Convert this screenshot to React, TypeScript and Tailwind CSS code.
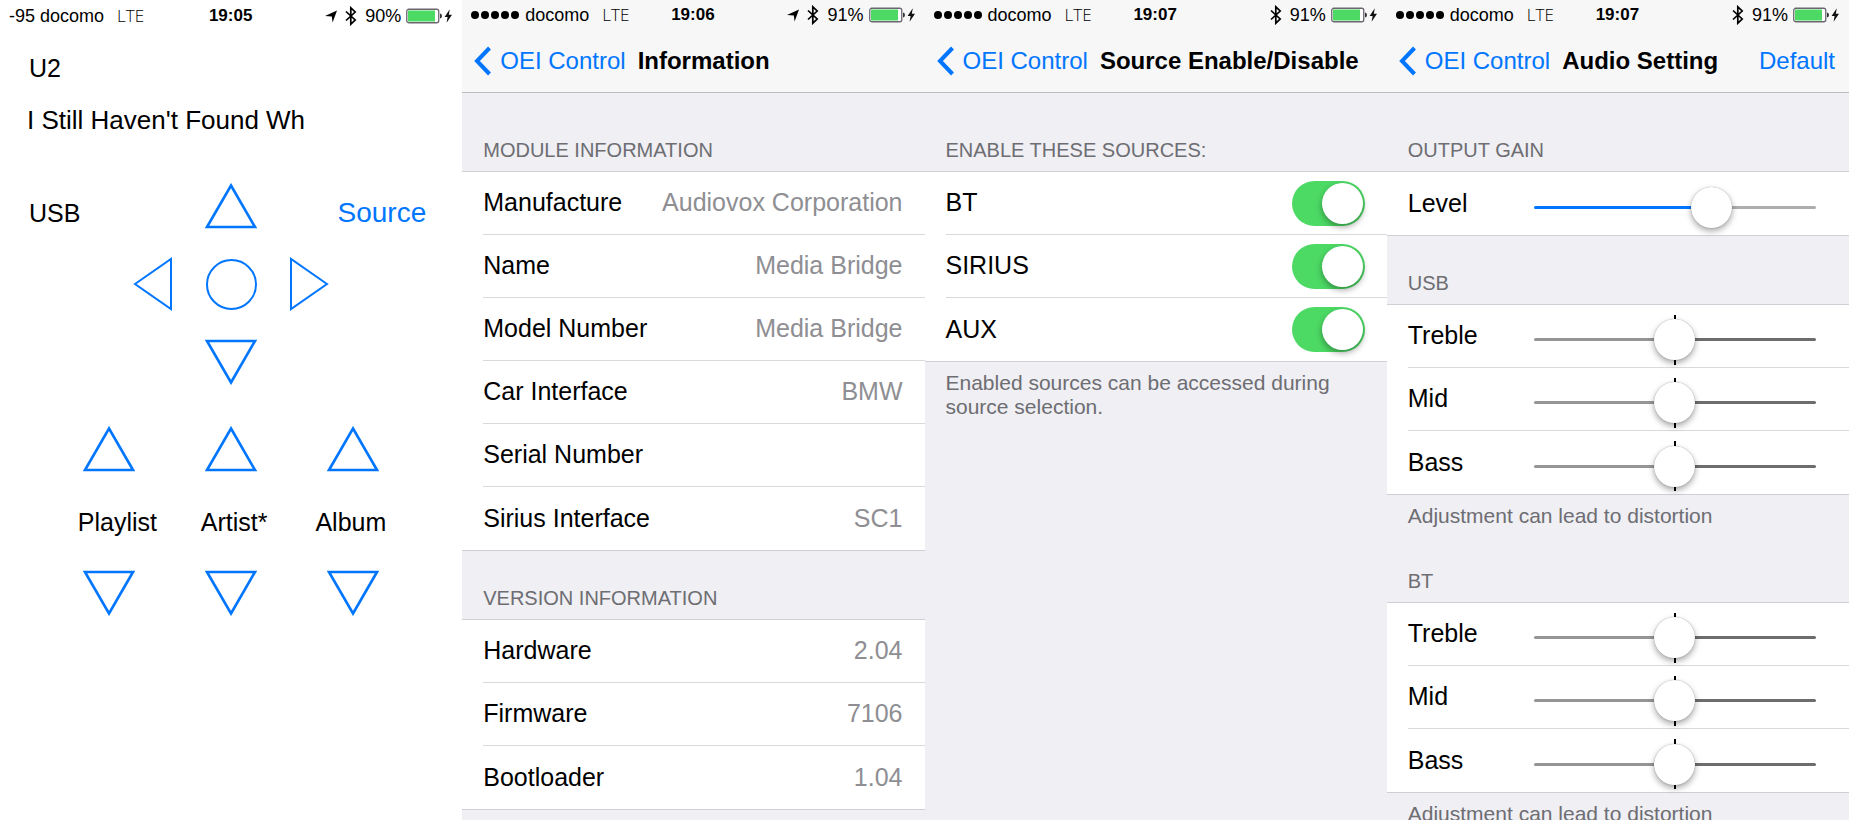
import { useState, type ReactNode } from 'react'

type Direction = 'up' | 'down' | 'left' | 'right'

const triangles: Record<Direction, { w: number, h: number, points: string }> = {
    up: { w: 52, h: 46, points: '26,2.5 50,44 2,44' },
    down: { w: 52, h: 46, points: '26,43.5 50,2 2,2' },
    left: { w: 40, h: 54, points: '2,27 38,2 38,52' },
    right: { w: 40, h: 54, points: '38,27 2,2 2,52' },
}

function TriangleButton({ direction, label }: { direction: Direction, label: string }) {
    const { w, h, points } = triangles[direction]
    const strokeWidth = h > w ? 2 : 2.6
    return (
        <button type="button" aria-label={label} className="text-[#0076ff]">
            <svg width={w} height={h} viewBox={`0 0 ${w} ${h}`} fill="none" stroke="currentColor" strokeWidth={strokeWidth}>
                <polygon points={points} />
            </svg>
        </button>
    )
}

function LocationIcon() {
    return (
        <svg width="12" height="13" viewBox="0 0 12 13" fill="currentColor" aria-hidden="true">
            <path d="M12 0.5 L7.6 12.5 L6.8 6.4 L0 6 Z" />
        </svg>
    )
}

function BluetoothIcon() {
    return (
        <svg width="12" height="20" viewBox="0 0 12 20" fill="none" stroke="currentColor" strokeWidth="1.7" aria-hidden="true">
            <path d="M1 5.5 L10.2 14 L5.8 18.2 V1.8 L10.2 6 L1 14.5" />
        </svg>
    )
}

function BatteryIcon() {
    return (
        <svg width="46" height="16" viewBox="0 0 46 16" aria-hidden="true">
            <rect x="0.75" y="1.25" width="32" height="13.5" rx="2" fill="#fff" stroke="#6b6570" strokeWidth="1.3" />
            <rect x="2" y="2.5" width="27" height="11" fill="#4cd964" />
            <path d="M34 5.5 Q36 5.8 36 8 Q36 10.2 34 10.5 Z" fill="#333" />
            <path d="M43.8 1.2 L38.6 9 H41.6 L40.6 14.8 L46 6.8 H42.8 Z" fill="#111" />
        </svg>
    )
}

function StatusBar({ carrier, dots, time, battery, location }: { carrier: string, dots?: boolean, time: string, battery: string, location?: boolean }) {
    return (
        <div className="grid h-[30px] grid-cols-[1fr_auto_1fr] items-center pl-[9px] pr-[10px] text-[18px]">
            <div className="flex items-center">
                {dots && (
                    <span className="mr-[6px] flex gap-[2px]">
                        {[0, 1, 2, 3, 4].map((dot) => <span key={dot} className="size-2 rounded-full bg-black" />)}
                    </span>
                )}
                <span>{carrier}</span>
                <span className="ml-[13px] font-['Open_Sans',sans-serif] text-[17px] font-light">LTE</span>
            </div>
            <span className="text-[17px] font-bold">{time}</span>
            <div className="flex items-center justify-end">
                {location && <span className="mr-[8px]"><LocationIcon /></span>}
                <BluetoothIcon />
                <span className="ml-[8px] mr-[5px]">{battery}</span>
                <BatteryIcon />
            </div>
        </div>
    )
}

function NavBar({ title, action }: { title: string, action?: string }) {
    return (
        <nav className="flex h-[62px] items-center pl-[12px] pr-[14px] text-2xl whitespace-nowrap">
            <a href="#oei-control" className="flex items-center gap-[9px] text-[#0076ff]">
                <svg width="17" height="30" viewBox="0 0 17 30" fill="none" stroke="currentColor" strokeWidth="4" aria-hidden="true">
                    <path d="M15.5 2 L3 15 L15.5 28" />
                </svg>
                OEI Control
            </a>
            <h1 className="ml-[12px] font-bold">{title}</h1>
            {action && <button type="button" className="ml-auto text-[#0076ff]">{action}</button>}
        </nav>
    )
}

function Screen({ header, children }: { header: ReactNode, children: ReactNode }) {
    return (
        <section className="min-w-0 bg-[#efeff4]">
            <header className="border-b border-[#bcbbc1] bg-[#f7f7f8]">{header}</header>
            <div className="pt-[10px]">{children}</div>
        </section>
    )
}

function SectionTitle({ children }: { children: ReactNode }) {
    return <h2 className="flex h-[68px] items-end pb-[7px] pl-[21px] text-xl text-[#6d6d72]">{children}</h2>
}

const listClass = 'border-y border-[#d0cfd5] bg-white pl-[21px] text-[25px]'
const rowClass = 'flex h-[63px] items-center border-b border-[#d9d8dc] last:border-b-0'

function InfoList({ items }: { items: [string, string][] }) {
    return (
        <dl className={listClass}>
            {items.map(([name, value]) => (
                <div key={name} className={`${rowClass} justify-between pr-[22px]`}>
                    <dt>{name}</dt>
                    <dd className="text-[#8e8e93]">{value}</dd>
                </div>
            ))}
        </dl>
    )
}

function SwitchRow({ name }: { name: string }) {
    const [on, setOn] = useState(true)
    return (
        <label className={`${rowClass} justify-between pr-[22px]`}>
            {name}
            <input
                type="checkbox"
                role="switch"
                checked={on}
                onChange={(e) => setOn(e.target.checked)}
                className="flex h-[45px] w-[73px] appearance-none items-center rounded-full bg-[#d9d9de] px-[2px] before:size-[41px] before:rounded-full before:bg-white before:shadow-[0_3px_6px_rgba(0,0,0,0.35)] checked:justify-end checked:bg-[#4cd964]"
            />
        </label>
    )
}

function SliderRow({ name, group, start, centered }: { name: string, group: string, start: number, centered?: boolean }) {
    const [value, setValue] = useState(start)
    const id = `${group}-${name}`
    const left = centered ? '#959595' : '#0076ff'
    const right = centered ? '#6d6d6d' : '#adadad'
    return (
        <div className={`${rowClass} pr-[33px]`}>
            <label htmlFor={id} className="w-[126px] shrink-0">{name}</label>
            <div className="relative mt-[7px] flex h-[50px] flex-1 items-center">
                <span
                    className="absolute inset-x-0 h-[3px] rounded-full"
                    style={{ background: `linear-gradient(to right, ${left} ${value}%, ${right} ${value}%)` }}
                />
                {centered && <span className="absolute inset-y-0 left-1/2 w-[2px] -translate-x-1/2 bg-black" />}
                <input
                    id={id}
                    type="range"
                    value={value}
                    onChange={(e) => setValue(Number(e.target.value))}
                    className="relative h-[41px] w-full appearance-none bg-transparent [&::-webkit-slider-thumb]:size-[41px] [&::-webkit-slider-thumb]:appearance-none [&::-webkit-slider-thumb]:rounded-full [&::-webkit-slider-thumb]:bg-white [&::-webkit-slider-thumb]:shadow-[0_0_1px_rgba(0,0,0,0.4),0_3px_6px_rgba(0,0,0,0.35)]"
                />
            </div>
        </div>
    )
}

function ToneControls({ source }: { source: string }) {
    return (
        <>
            <SectionTitle>{source}</SectionTitle>
            <div className={listClass}>
                <SliderRow name="Treble" group={source} start={50} centered />
                <SliderRow name="Mid" group={source} start={50} centered />
                <SliderRow name="Bass" group={source} start={50} centered />
            </div>
            <p className="h-[39px] pl-[21px] pt-[9px] text-[21px] leading-6 text-[#6d6d72]">Adjustment can lead to distortion</p>
        </>
    )
}

function PlayerScreen() {
    const lists = ['Playlist', 'Artist*', 'Album']
    return (
        <section className="min-w-0 bg-white text-[25px] leading-8">
            <StatusBar carrier="-95 docomo" time="19:05" battery="90%" location />
            <p className="mt-[22px] pl-[29px]">U2</p>
            <p className="mt-[20px] pl-[27px] text-[26px] leading-8">I Still Haven't Found Wh</p>

            <div className="mt-[31px] grid auto-rows-[78px] grid-cols-[1fr_78px_78px_78px_1fr] place-items-center">
                <span className="col-span-2 justify-self-start pl-[29px] pt-[14px]">USB</span>
                <TriangleButton direction="up" label="Up" />
                <button type="button" className="col-span-2 justify-self-end pr-[36px] pt-[14px] text-[28px] text-[#0076ff]">Source</button>
                <div className="col-start-2 flex"><TriangleButton direction="left" label="Left" /></div>
                <button type="button" aria-label="Select" className="size-[51px] rounded-full border-2 border-[#0076ff]" />
                <TriangleButton direction="right" label="Right" />
                <div className="col-start-3 flex"><TriangleButton direction="down" label="Down" /></div>
            </div>

            <div className="mt-[25px] grid grid-cols-3 justify-items-center px-12">
                {lists.map((name) => <TriangleButton key={name} direction="up" label={`Previous ${name}`} />)}
            </div>
            <div className="mt-[34px] grid grid-cols-3 justify-items-center pl-[59px] pr-[53px]">
                {lists.map((name) => <span key={name}>{name}</span>)}
            </div>
            <div className="mt-[32px] grid grid-cols-3 justify-items-center px-12">
                {lists.map((name) => <TriangleButton key={name} direction="down" label={`Next ${name}`} />)}
            </div>
        </section>
    )
}

export default function App() {
    return (
        <main className="grid h-screen grid-cols-4 overflow-hidden bg-white font-['Liberation_Sans',Arial,sans-serif] text-black">
            <PlayerScreen />

            <Screen header={<><StatusBar dots carrier="docomo" time="19:06" battery="91%" location /><NavBar title="Information" /></>}>
                <SectionTitle>MODULE INFORMATION</SectionTitle>
                <InfoList
                    items={[
                        ['Manufacture', 'Audiovox Corporation'],
                        ['Name', 'Media Bridge'],
                        ['Model Number', 'Media Bridge'],
                        ['Car Interface', 'BMW'],
                        ['Serial Number', ''],
                        ['Sirius Interface', 'SC1'],
                    ]}
                />
                <SectionTitle>VERSION INFORMATION</SectionTitle>
                <InfoList items={[['Hardware', '2.04'], ['Firmware', '7106'], ['Bootloader', '1.04']]} />
            </Screen>

            <Screen header={<><StatusBar dots carrier="docomo" time="19:07" battery="91%" /><NavBar title="Source Enable/Disable" /></>}>
                <SectionTitle>ENABLE THESE SOURCES:</SectionTitle>
                <div className={listClass}>
                    <SwitchRow name="BT" />
                    <SwitchRow name="SIRIUS" />
                    <SwitchRow name="AUX" />
                </div>
                <p className="px-[21px] pt-[9px] text-[21px] leading-6 text-[#6d6d72]">Enabled sources can be accessed during source selection.</p>
            </Screen>

            <Screen header={<><StatusBar dots carrier="docomo" time="19:07" battery="91%" /><NavBar title="Audio Setting" action="Default" /></>}>
                <SectionTitle>OUTPUT GAIN</SectionTitle>
                <div className={listClass}>
                    <SliderRow name="Level" group="gain" start={65} />
                </div>
                <ToneControls source="USB" />
                <ToneControls source="BT" />
            </Screen>
        </main>
    )
}
